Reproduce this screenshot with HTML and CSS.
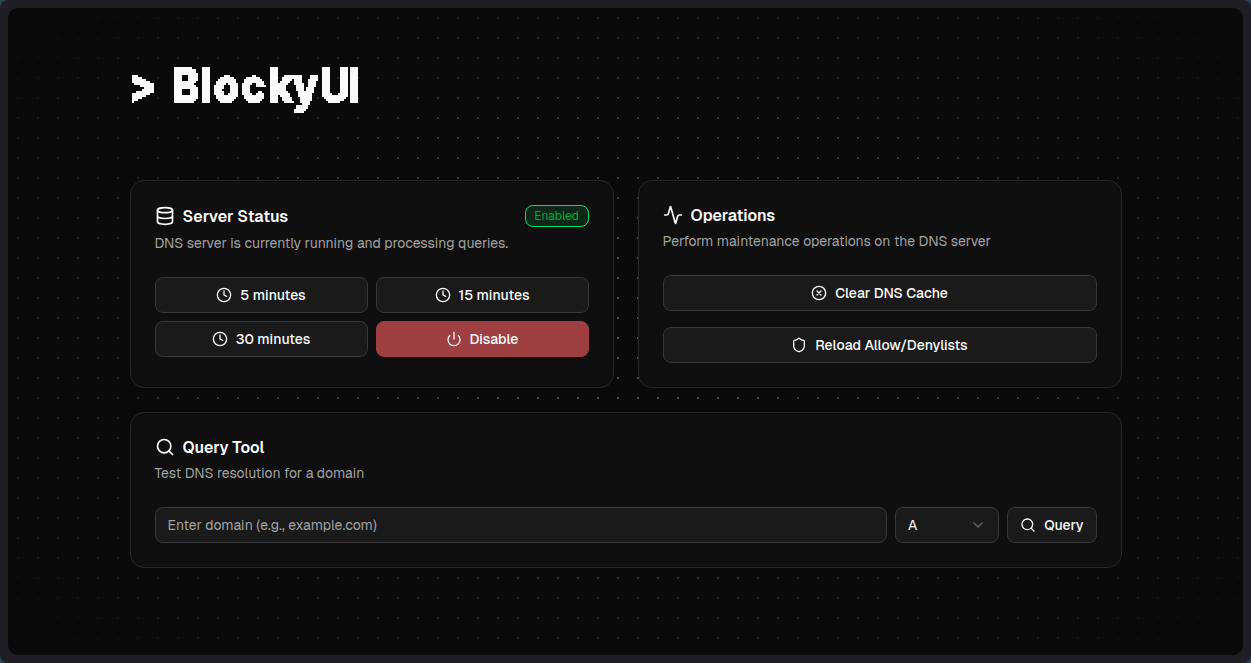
FILE: index.html
```html
<!DOCTYPE html>
<html lang="en">
<head>
<meta charset="utf-8">
<title>BlockyUI</title>
<link rel="stylesheet" href="styles.css">
</head>
<body>
<svg class="defs" width="0" height="0" aria-hidden="true">
  <symbol id="clock" viewBox="0 0 24 24"><circle cx="12" cy="12" r="10"/><path d="M12 6v6l4 2"/></symbol>
  <symbol id="search" viewBox="0 0 24 24"><circle cx="11" cy="11" r="8"/><path d="m21 21-4.3-4.3"/></symbol>
  <filter id="pixel" filterUnits="userSpaceOnUse" x="0" y="0" width="240" height="60">
    <feFlood x="0" y="0" width="1" height="1" flood-color="#fff" result="dot"/>
    <feOffset in="dot" dx="0" dy="0" x="0" y="0" width="2" height="2"/>
    <feTile x="0" y="0" width="240" height="60" result="mesh"/>
    <feComposite in="SourceGraphic" in2="mesh" operator="in"/>
    <feComponentTransfer result="a"><feFuncA type="discrete" tableValues="0 1"/></feComponentTransfer>
    <feOffset in="a" dx="1" dy="0" result="b"/>
    <feMerge result="ab"><feMergeNode in="a"/><feMergeNode in="b"/></feMerge>
    <feOffset in="ab" dx="0" dy="1" result="cd"/>
    <feMerge><feMergeNode in="ab"/><feMergeNode in="cd"/></feMerge>
  </filter>
</svg>
<div class="window">
  <div class="dots"></div>
  <main class="content">
    <h1 class="logo"><svg width="240" height="60" viewBox="0 0 240 60"><g filter="url(#pixel)"><text transform="scale(.87 1)" y="47" x="-2.2 47.5 80.5 95.5 127 158.5 186.5 217.5 250.5">&gt;BlockyUI</text></g></svg></h1>
    <div class="grid">
      <section class="card">
        <div class="head status-head">
          <h2><svg class="icon lg" viewBox="0 0 24 24"><ellipse cx="12" cy="5" rx="9" ry="3"/><path d="M3 5v14a9 3 0 0 0 18 0V5M3 12a9 3 0 0 0 18 0"/></svg><span>Server Status</span></h2>
          <span class="badge">Enabled</span>
        </div>
        <p class="desc">DNS server is currently running and processing queries.</p>
        <div class="buttons">
          <button class="btn"><svg class="icon"><use href="#clock"/></svg><span>5 minutes</span></button>
          <button class="btn"><svg class="icon"><use href="#clock"/></svg><span>15 minutes</span></button>
          <button class="btn"><svg class="icon"><use href="#clock"/></svg><span>30 minutes</span></button>
          <button class="btn danger"><svg class="icon" viewBox="0 0 24 24"><path d="M12 2v10M18.4 6.6a9 9 0 1 1-12.77.04"/></svg><span>Disable</span></button>
        </div>
      </section>
      <section class="card">
        <div class="head"><h2><svg class="icon lg" viewBox="0 0 24 24"><path d="M22 12h-2.48a2 2 0 0 0-1.93 1.46l-2.35 8.36a.25.25 0 0 1-.48 0L9.24 2.18a.25.25 0 0 0-.48 0l-2.35 8.36A2 2 0 0 1 4.49 12H2"/></svg><span>Operations</span></h2></div>
        <p class="desc">Perform maintenance operations on the DNS server</p>
        <div class="stack">
          <button class="btn"><svg class="icon" viewBox="0 0 24 24"><circle cx="12" cy="12" r="10"/><path d="m15 9-6 6M9 9l6 6"/></svg><span>Clear DNS Cache</span></button>
          <button class="btn"><svg class="icon" viewBox="0 0 24 24"><path d="M20 13c0 5-3.5 7.5-7.66 8.95a1 1 0 0 1-.67-.01C7.5 20.5 4 18 4 13V6a1 1 0 0 1 1-1c2 0 4.5-1.2 6.24-2.72a1.17 1.17 0 0 1 1.52 0C14.51 3.81 17 5 19 5a1 1 0 0 1 1 1z"/></svg><span>Reload Allow/Denylists</span></button>
        </div>
      </section>
      <section class="card wide">
        <div class="head"><h2><svg class="icon lg"><use href="#search"/></svg><span>Query Tool</span></h2></div>
        <p class="desc">Test DNS resolution for a domain</p>
        <div class="query">
          <input class="field" placeholder="Enter domain (e.g., example.com)">
          <button class="btn select"><span>A</span><svg class="icon chevron" viewBox="0 0 24 24"><path d="m6 9 6 6 6-6"/></svg></button>
          <button class="btn go"><svg class="icon"><use href="#search"/></svg><span>Query</span></button>
        </div>
      </section>
    </div>
  </main>
</div>
</body>
</html>
```
FILE: styles.css
```css
* { box-sizing: border-box; }
html { background: #2c4452; }
body {
  margin: 0; height: 663px; overflow: hidden; padding: 8px; border-radius: 8px;
  background: #1f1e25;
  font-family: Geist, Inter, "Liberation Sans", sans-serif; color: #fafafa;
}
.defs { display: block; position: absolute; }
.window {
  position: relative; height: 647px; border-radius: 10px; overflow: hidden; background: #0a0a0a;
}
.dots {
  position: absolute; inset: 0;
  background-image: conic-gradient(from 0deg at 2px 2px, transparent 0 270deg, #525252 270deg);
  background-size: 20px 20px; background-position: 9px 9px;
  -webkit-mask-image: radial-gradient(ellipse at center, #000 0%, transparent 100%);
  mask-image: radial-gradient(ellipse at center, #000 0%, transparent 100%);
}
.content { position: relative; width: 992px; margin: 0 auto; padding-top: 47px; }
.logo { margin: 0; height: 125px; }
.logo svg { display: block; overflow: visible; margin-left: .5px; }
.logo text { font: 800 48px Inter, sans-serif; fill: #fafafa; stroke: #fafafa; stroke-width: 1.4px; }
.grid { display: grid; grid-template-columns: 484px 484px; gap: 24px; }
.card {
  height: 208px; border: 1px solid #272727; border-radius: 14px; background: #0f0f0f; padding: 24px;
}
.card.wide { grid-column: 1 / 3; height: 156px; }
.head { display: flex; align-items: center; justify-content: space-between; height: 20px; }
.status-head { height: 22px; }
h2 {
  display: flex; align-items: center; gap: 8px; margin: 0; font-size: 16px; line-height: 20px;
  font-weight: 600;
}
h2 span { padding-top: 1px; margin-bottom: -1px; }
.icon { width: 16px; height: 16px; flex: none; fill: none; stroke: currentColor; stroke-width: 2; stroke-linecap: round; stroke-linejoin: round; }
.lg { width: 20px; height: 20px; }
.badge {
  width: 64px; height: 22px; border: 1px solid #05df72; border-radius: 8px; background: #0d2818;
  color: #00a63e; font-size: 12px; line-height: 20px; text-align: center;
}
.desc { margin: 6px 0 0; font-size: 14px; line-height: 20px; color: #a1a1a1; white-space: nowrap; }
.buttons { display: grid; grid-template-columns: 1fr 1fr; gap: 8px; margin-top: 24px; }
.stack { display: flex; flex-direction: column; gap: 16px; margin-top: 24px; }
.btn {
  display: flex; align-items: center; justify-content: center; gap: 8px; height: 36px; padding: 0 12px;
  border: 1px solid #383838; border-radius: 8px; background: #1a1a1a; color: #fafafa;
  font: 500 14px/20px Geist, Inter, sans-serif; white-space: nowrap;
}
.danger { border-color: #9e4042; background: #9e4042; }
.query { display: flex; gap: 8px; margin-top: 24px; }
.field {
  flex: 1; min-width: 0; height: 36px; padding: 0 12px; border: 1px solid #383838; border-radius: 8px;
  background: #1a1a1a; color: #fafafa; font: 400 14px/20px Geist, Inter, sans-serif;
}
.field::placeholder { color: #a1a1a1; opacity: 1; }
.select { width: 104px; justify-content: space-between; font-weight: 400; }
.chevron { color: #656565; }
.go { width: 89.4px; }
```
